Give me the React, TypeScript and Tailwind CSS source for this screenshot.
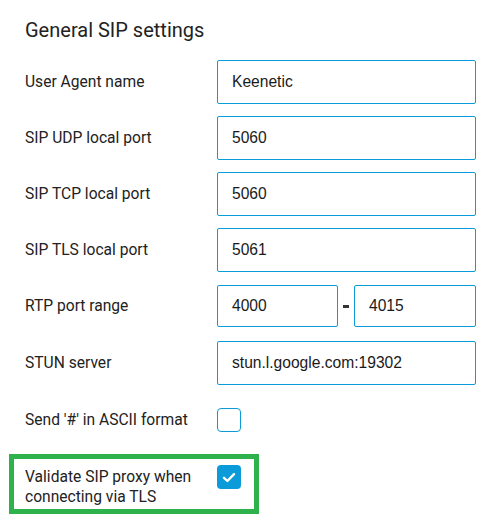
import React from 'react';

const labelCls = "w-[192px] shrink-0 text-[15.6px] leading-[20px] text-[#222] font-['Roboto',sans-serif]";
const inputCls =
  "h-full w-full rounded-[2px] border border-[#0a9bd8] bg-white px-[14px] text-[15.6px] text-[#1a1a1a] outline-none font-['Liberation_Sans',Arial,sans-serif]";

const TextRow = ({ label, value, className = '' }: { label: string; value: string; className?: string }) => (
  <div className={`flex items-center pl-[25px] ${className}`}>
    <span className={labelCls}>{label}</span>
    <div className="h-[44px] w-[259px]">
      <input className={inputCls} value={value} readOnly />
    </div>
  </div>
);

const Checkbox = ({ checked }: { checked: boolean }) =>
  checked ? (
    <div className="flex h-[24px] w-[24px] items-center justify-center rounded-[4px] bg-[#0a9bd8]">
      <svg width="14" height="11" viewBox="0 0 14 11" fill="none">
        <path d="M2 5.8 L5.4 9 L12 2.2" stroke="white" strokeWidth="2.4" strokeLinecap="round" strokeLinejoin="round" />
      </svg>
    </div>
  ) : (
    <div className="h-[24px] w-[24px] rounded-[4px] border border-[#0a9bd8] bg-white" />
  );

const App = () => {
  return (
    <div className="h-[528px] w-[494px] bg-white pt-[16px]">
      <h2 className="pl-[25px] text-[20px] leading-[28px] text-[#222] font-['Roboto',sans-serif]">
        General SIP settings
      </h2>

      <div className="mt-[16px] flex flex-col">
        <TextRow label="User Agent name" value="Keenetic" />
        <TextRow label="SIP UDP local port" value="5060" className="mt-[12px]" />
        <TextRow label="SIP TCP local port" value="5060" className="mt-[12px]" />
        <TextRow label="SIP TLS local port" value="5061" className="mt-[12px]" />

        <div className="mt-[13px] flex items-center pl-[25px]">
          <span className={labelCls}>RTP port range</span>
          <div className="flex h-[42px] items-center gap-[5px]">
            <div className="h-full w-[121px]">
              <input className={inputCls} value="4000" readOnly />
            </div>
            <div className="h-[3px] w-[6px] bg-[#333]" />
            <div className="h-full w-[122px]">
              <input className={inputCls} value="4015" readOnly />
            </div>
          </div>
        </div>

        <TextRow label="STUN server" value="stun.l.google.com:19302" className="mt-[14px]" />

        <div className="mt-[23px] flex h-[24px] items-center pl-[25px]">
          <span className={labelCls}>Send '#' in ASCII format</span>
          <Checkbox checked={false} />
        </div>

        <div className="ml-[9px] mt-[22px] flex w-[250px] items-start border-[5px] border-[#2db24c] pb-[2px] pl-[11px] pt-[6px]">
          <span className={`${labelCls} w-[192px] pt-[2px]`}>
            Validate SIP proxy when
            <br />
            connecting via TLS
          </span>
          <Checkbox checked />
        </div>
      </div>
    </div>
  );
};

export default App;
